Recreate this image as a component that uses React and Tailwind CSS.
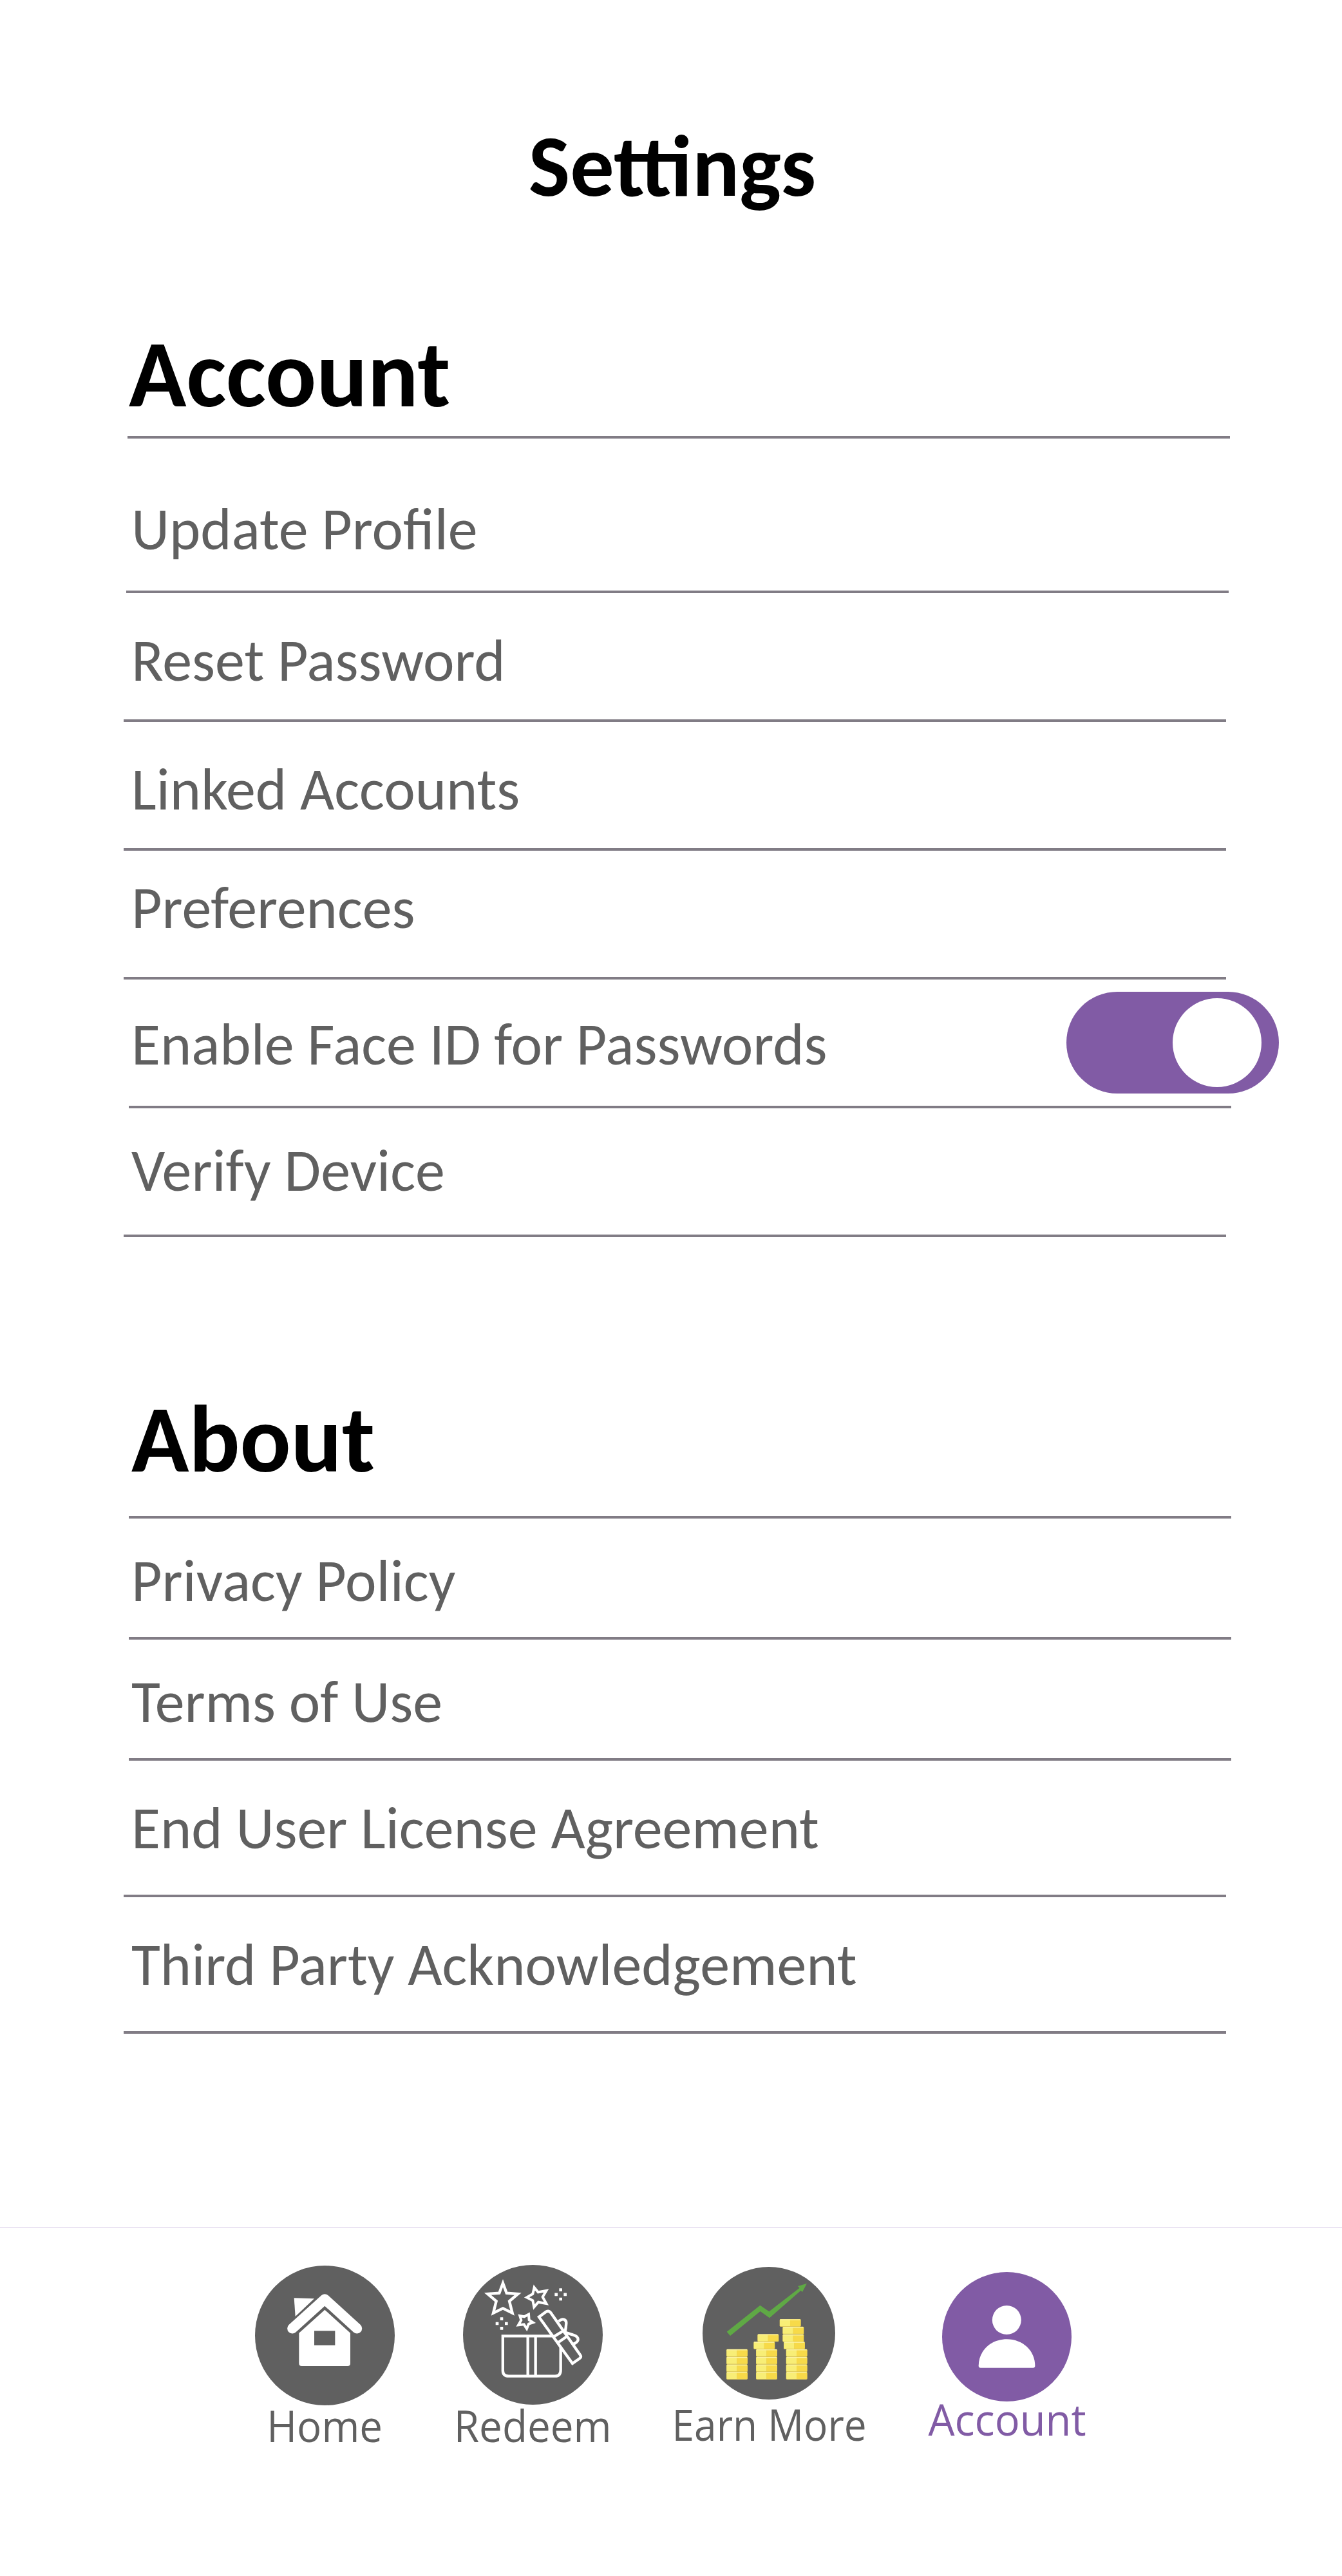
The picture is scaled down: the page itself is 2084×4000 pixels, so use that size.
import React from "react";

const accountRows = [
  { label: "Update Profile", row: "ml-[196px] h-[240px] pt-[95px] pl-[8px]" },
  { label: "Reset Password", row: "ml-[192px] h-[200px] pt-[59px] pl-[12px]" },
  { label: "Linked Accounts", row: "ml-[192px] h-[200px] pt-[59px] pl-[12px]" },
  { label: "Preferences", row: "ml-[192px] h-[200px] pt-[43px] pl-[12px]" },
  { label: "Enable Face ID for Passwords", row: "ml-[200px] h-[200px] pt-[55px] pl-[4px]", toggle: true },
  { label: "Verify Device", row: "ml-[192px] h-[200px] pt-[51px] pl-[12px]" },
];

const aboutRows = [
  { label: "Privacy Policy", row: "ml-[200px] h-[188px] pt-[51px] pl-[4px]" },
  { label: "Terms of Use", row: "ml-[200px] h-[188px] pt-[51px] pl-[4px]" },
  { label: "End User License Agreement", row: "ml-[192px] h-[212px] pt-[59px] pl-[12px]" },
  { label: "Third Party Acknowledgement", row: "ml-[192px] h-[212px] pt-[59px] pl-[12px]" },
];

function Toggle() {
  return (
    <span className="-mt-[36.5px] -mr-[74px] flex h-[158.5px] w-[330px] shrink-0 items-center justify-end rounded-full bg-[#815ba5] pr-[27px]">
      <span className="size-[138px] rounded-full bg-white" />
    </span>
  );
}

function Row({ label, row, toggle }) {
  return (
    <li className={`flex w-[1712px] items-start justify-between border-b-4 border-[#817c85] ${row}`}>
      <span className="text-[92px] leading-[92px] whitespace-nowrap text-[#606060]">{label}</span>
      {toggle && <Toggle />}
    </li>
  );
}

function HomeIcon() {
  return (
    <svg className="size-[217px]" viewBox="108 235 651 651">
      <circle cx="433.500" cy="560.500" r="325.500" fill="#606060" />
      <path d="M290 386L384 389L296 472Z" fill="#fff" />
      <path d="M282 528L433 391.500L583 528" fill="none" stroke="#fff" strokeWidth="47" strokeLinecap="round" strokeLinejoin="round" />
      <path d="M313 549L433 441L552 549V690Q552 703 539 703H326Q313 703 313 690Z" fill="#fff" />
      <rect x="384" y="539" width="97" height="67" fill="#606060" />
    </svg>
  );
}

function RedeemIcon() {
  const dots = [[572, 198], [551, 219.5], [593, 219.5], [572, 241], [297, 333], [276, 355], [319, 355], [297, 377]];
  return (
    <svg className="size-[217px]" viewBox="117 82 651 651">
      <circle cx="442.500" cy="407.500" r="325.500" fill="#606060" />
      <g fill="none" stroke="#fff" strokeWidth="13" strokeMiterlimit="10">
        <path d="M303 167L320 213L373 217L333 251L347 306L303 284L258 306L272 251L232 217L286 213Z" />
        <path d="M449 187L467 209L505 202L488 231L505 262L468 255L448 278L442 248L414 233L442 217Z" strokeWidth="12" />
        <path d="M382 319L402 323L423 312L425 338L443 350L423 357L414 379L401 359L375 362L388 339Z" strokeWidth="12" />
        <path d="M536 413H302.500V574Q302.500 600 330 600H546Q572 600 572 570V462" />
        <path d="M419 413V600M455 413V600" />
        <path d="M471 324L627 541L660 518Q670 511 663 501L526 305Q517 292 504 300Z" />
        <path d="M540 416L583 390M561 443L605 412" />
        <path d="M562 345Q577 332 588 336Q599 341 598 353Q597 375 592 396L630 408Q655 415 653 431Q650 444 632 450" />
      </g>
      {dots.map(([x, y]) => (
        <rect key={`${x}-${y}`} x={x - 7} y={y - 7} width="14" height="14" rx="1" fill="#fff" />
      ))}
    </svg>
  );
}

function EarnIcon() {
  const coins = [
    [294, 443], [294, 478.5], [294, 514], [294, 549],
    [439, 373], [421, 408], [432, 443], [432, 478.5], [432, 514], [432, 549],
    [542, 303], [556, 338.5], [556, 374], [561, 408], [572, 443], [572, 478.5], [572, 514], [572, 549],
  ];
  return (
    <svg className="size-[206px]" viewBox="183 60 618 618">
      <circle cx="492" cy="369" r="309" fill="#606060" />
      <path d="M296 362L451 239L493 268L635 158L627 150L669 137L648 177L641 170L495 298L452 267L312 381Z" fill="#5fa945" />
      {coins.map(([x, y]) => (
        <g key={`${x}-${y}`} transform={`translate(${x} ${y})`}>
          <rect width="99" height="36" rx="5" fill="#dcc75a" />
          <path d="M5 1H49V33H5Q1 33 1 29V5Q1 1 5 1Z" fill="#f8ee76" />
          <path d="M49 1H94Q98 1 98 5V29Q98 33 94 33H49Z" fill="#f7da49" />
          <path d="M3 3.500H96" stroke="#fbf2a6" strokeWidth="4" />
        </g>
      ))}
    </svg>
  );
}

function AccountIcon() {
  return (
    <svg className="size-[201px]" viewBox="97 84 603 603">
      <circle cx="398.500" cy="385.500" r="301.500" fill="#815ba5" />
      <circle cx="398" cy="307.500" r="67.500" fill="#fff" />
      <path d="M267 521C267 450 325 397 398.500 397S530 450 530 521Q530 530 521 530H276Q267 530 267 521Z" fill="#fff" />
    </svg>
  );
}

const tabs = [
  { label: "Home", Icon: HomeIcon, item: "w-[300px] pt-[59px]", text: "-mt-[3px] scale-x-[0.945] text-[#606060]" },
  { label: "Redeem", Icon: RedeemIcon, item: "w-[346px] pt-[58px]", text: "-mt-[2px] scale-x-[0.948] text-[#606060]" },
  { label: "Earn More", Icon: EarnIcon, item: "w-[387px] pt-[61px]", text: "mt-[4px] ml-[2px] scale-x-[0.923] text-[#606060]" },
  { label: "Account", Icon: AccountIcon, item: "w-[351px] pt-[69px]", text: "-mt-[7px] ml-[2px] scale-x-[0.965] text-[#815ba5]" },
];

export default function App() {
  return (
    <div className="flex h-[4000px] w-[2084px] flex-col justify-between overflow-hidden bg-white font-['Carlito','Calibri','Lato',sans-serif]">
      <main>
        <h1 className="pt-[190px] pl-[4px] text-center text-[136.4px] leading-[136px] font-bold text-black">Settings</h1>
        <section>
          <h2 className="ml-[198px] h-[355px] w-[1712px] border-b-4 border-[#817c85] pt-[181px] pl-[2px] text-[147.5px] leading-[148px] font-bold text-black">
            Account
          </h2>
          <ul>{accountRows.map((r) => <Row key={r.label} {...r} />)}</ul>
        </section>
        <section>
          <h2 className="ml-[200px] h-[437px] w-[1712px] border-b-4 border-[#817c85] pt-[240px] pl-[4px] text-[147.5px] leading-[148px] font-bold text-black">
            About
          </h2>
          <ul>{aboutRows.map((r) => <Row key={r.label} {...r} />)}</ul>
        </section>
      </main>
      <nav className="flex h-[542px] items-start border-t border-[#e0d6ec] pl-[354.5px]">
        {tabs.map(({ label, Icon, item, text }) => (
          <a key={label} className={`flex flex-col items-center ${item}`}>
            <Icon />
            <span className={`font-['Open_Sans',sans-serif] text-[67.3px] leading-[68px] whitespace-nowrap ${text}`}>{label}</span>
          </a>
        ))}
      </nav>
    </div>
  );
}
